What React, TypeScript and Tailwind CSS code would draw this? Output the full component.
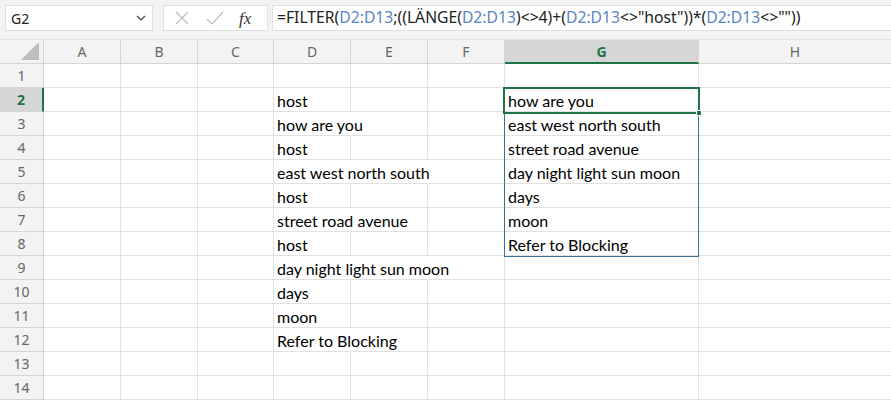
import React from "react";

const cols = [
  { k: "A", w: 77 },
  { k: "B", w: 77 },
  { k: "C", w: 76 },
  { k: "D", w: 77 },
  { k: "E", w: 77 },
  { k: "F", w: 77 },
  { k: "G", w: 194 },
  { k: "H", w: 193 },
];

const dCol: Record<number, string> = {
  2: "host",
  3: "how are you",
  4: "host",
  5: "east west north south",
  6: "host",
  7: "street road avenue",
  8: "host",
  9: "day night light sun moon",
  10: "days",
  11: "moon",
  12: "Refer to Blocking",
};

const gCol: Record<number, string> = {
  2: "how are you",
  3: "east west north south",
  4: "street road avenue",
  5: "day night light sun moon",
  6: "days",
  7: "moon",
  8: "Refer to Blocking",
};

// cells whose right gridline is hidden by overflowing text
const noRight: Record<string, boolean> = {
  "D3": true,
  "D5": true,
  "E5": true,
  "D7": true,
  "D9": true,
  "E9": true,
  "D12": true,
};

const ui = { fontFamily: '"Noto Sans", "Open Sans", sans-serif' };
const cellFont = { fontFamily: 'Lato, "Liberation Sans", sans-serif' };

function Ref({ children }: { children: React.ReactNode }) {
  return <span className="text-[#5b86c5]">{children}</span>;
}

export default function App() {
  const rows = Array.from({ length: 14 }, (_, i) => i + 1);
  return (
    <div className="w-[891px] h-[401px] overflow-hidden bg-white select-none">
      {/* formula bar */}
      <div className="h-[40px] bg-[#f3f3f3] flex items-start pt-[5px] pl-[5px] border-b border-[#e3e3e3]" style={ui}>
        <div className="w-[148px] h-[26px] bg-white border border-[#e1e1e1] flex items-center justify-between pl-[5px] pr-[6px]">
          <span className="text-[14px] text-[#222]">G2</span>
          <svg width="10" height="6" viewBox="0 0 10 6">
            <path d="M1 1 L5 5 L9 1" fill="none" stroke="#444" strokeWidth="1.2" />
          </svg>
        </div>
        <div className="ml-[10px] w-[105px] h-[26px] bg-white border border-[#e1e1e1] flex items-center">
          <svg width="16" height="16" viewBox="0 0 16 16" className="ml-[10px]">
            <path d="M2 2 L14 14 M14 2 L2 14" stroke="#bdbdbd" strokeWidth="1.2" fill="none" />
          </svg>
          <svg width="20" height="16" viewBox="0 0 20 16" className="ml-[15px]">
            <path d="M2 9 L7 14 L18 2" stroke="#bdbdbd" strokeWidth="1.2" fill="none" />
          </svg>
          <span className="ml-[14px] text-[17px] italic text-[#333] leading-none" style={{ fontFamily: '"Liberation Serif", serif' }}>
            fx
          </span>
        </div>
        <div className="ml-[4px] flex-1 h-[26px] bg-white border-y border-l border-[#e1e1e1] flex items-center pl-[4px] text-[15.7px] text-[#222] whitespace-nowrap" style={ui}>
          <span>
            =FILTER(<Ref>D2:D13</Ref>;((LÄNGE(<Ref>D2:D13</Ref>)&lt;&gt;4)+(<Ref>D2:D13</Ref>&lt;&gt;"host"))*(<Ref>D2:D13</Ref>&lt;&gt;""))
          </span>
        </div>
      </div>

      {/* grid */}
      <div className="relative">
        <div
          className="grid"
          style={{ gridTemplateColumns: `44px ${cols.map((c) => c.w + "px").join(" ")}`, gridAutoRows: "24px" }}
        >
          {/* header row */}
          <div className="bg-[#f3f3f3] border-r border-b border-[#d4d4d4] relative">
            <svg width="20" height="20" viewBox="0 0 20 20" className="absolute right-[3px] bottom-[2px]">
              <path d="M19 1 L19 19 L1 19 Z" fill="#bdbdbd" />
            </svg>
          </div>
          {cols.map((c) =>
            c.k === "G" ? (
              <div
                key={c.k}
                className="bg-[#d6d6d6] border-r border-[#d4d4d4] border-b-2 border-b-[#217346] flex items-center justify-center text-[14px] font-bold text-[#217346]"
                style={ui}
              >
                {c.k}
              </div>
            ) : (
              <div
                key={c.k}
                className="bg-[#f3f3f3] border-r border-b border-[#d4d4d4] flex items-center justify-center text-[14px] text-[#666]"
                style={ui}
              >
                {c.k}
              </div>
            )
          )}
          {rows.map((r) => (
            <React.Fragment key={r}>
              {r === 2 ? (
                <div
                  className="bg-[#d6d6d6] border-b border-[#d4d4d4] border-r-2 border-r-[#217346] flex items-center justify-center text-[14px] font-bold text-[#217346]"
                  style={ui}
                >
                  {r}
                </div>
              ) : (
                <div
                  className="bg-[#f3f3f3] border-r border-b border-[#d4d4d4] flex items-center justify-center text-[14px] text-[#666]"
                  style={ui}
                >
                  {r}
                </div>
              )}
              {cols.map((c) => {
                const txt = c.k === "D" ? dCol[r] : c.k === "G" ? gCol[r] : undefined;
                const hide = noRight[c.k + r];
                return (
                  <div
                    key={c.k}
                    className={
                      hide
                        ? "border-r border-r-transparent border-b border-b-[#e1e1e1] pl-[3px] pt-[2px] flex items-center text-[16px] text-black whitespace-nowrap overflow-visible min-w-0"
                        : "border-r border-b border-[#e1e1e1] pl-[3px] pt-[2px] flex items-center text-[16px] text-black whitespace-nowrap overflow-visible min-w-0"
                    }
                    style={cellFont}
                  >
                    {txt && <span className="relative z-10">{txt}</span>}
                  </div>
                );
              })}
            </React.Fragment>
          ))}
        </div>
        {/* spill range border */}
        <div className="absolute left-[504px] top-[48px] w-[195px] h-[169px] border border-[#3c6e8f] pointer-events-none z-20" />
        {/* active cell */}
        <div className="absolute left-[503px] top-[47px] w-[197px] h-[27px] border-2 border-[#217346] pointer-events-none z-20" />
        <div className="absolute left-[696px] top-[70px] w-[6px] h-[6px] bg-[#217346] border border-white pointer-events-none z-20" />
      </div>
    </div>
  );
}
